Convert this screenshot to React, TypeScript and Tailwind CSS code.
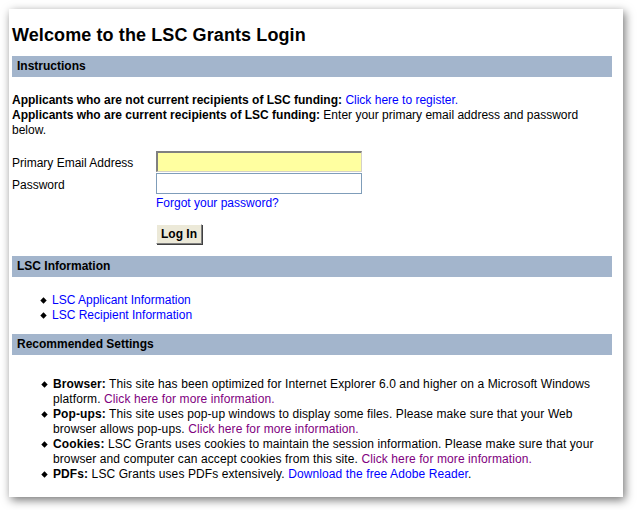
const font = "font-['Liberation_Sans',Arial,sans-serif]";

function SectionBar({ title }: { title: string }) {
  return (
    <div className="h-[21px] bg-[#a3b5cc] pl-[5px] flex items-center">
      <span className="text-[12px] font-bold text-black">{title}</span>
    </div>
  );
}

function Bullet({ children }: { children: React.ReactNode }) {
  return (
    <li className="flex">
      <span className="w-[11px] shrink-0 flex justify-start pt-[5px]">
        <span className="block w-[5px] h-[5px] bg-black rotate-45 scale-90" />
      </span>
      <span>{children}</span>
    </li>
  );
}

export default function App() {
  return (
    <div className={`w-[637px] h-[510px] bg-white p-[9px] ${font}`}>
      <div className="w-[614px] h-[488px] bg-white shadow-[2px_3px_9px_rgba(0,0,0,0.55)] pl-[3px] pr-[11px] text-[12px] leading-[15px] text-black">
        <h1 className="pt-[15px] h-[47px] text-[18px] leading-[22px] font-bold tracking-[0.1px]">
          Welcome to the LSC Grants Login
        </h1>

        <SectionBar title="Instructions" />
        <div className="pt-[16px]">
          <p>
            <b>Applicants who are not current recipients of LSC funding:</b>{" "}
            <a className="text-[#0000ff]">Click here to register.</a>
            <br />
            <b>Applicants who are current recipients of LSC funding:</b> Enter your primary email address and password below.
          </p>
        </div>

        <div className="mt-[13px] grid grid-cols-[144px_206px] gap-y-[1px]">
          <label className="h-[21px] pt-[5px]">Primary Email Address</label>
          <div className="h-[21px] bg-[#ffffa0] border-t-2 border-l-2 border-[#808080] border-r border-r-[#d4d0c8] border-b border-b-[#d4d0c8]" />
          <label className="h-[21px] pt-[5px]">Password</label>
          <div className="h-[21px] bg-white border border-[#7f9db9]" />
          <div />
          <a className="text-[#0000ff] h-[17px] flex items-center">Forgot your password?</a>
          <div />
          <div className="pt-[11px]">
            <button className="h-[20px] px-[4px] bg-[#ece9d8] text-[12px] font-bold border border-t-white border-l-white border-r-[#808080] border-b-[#808080] shadow-[1px_1px_0_#404040]">
              Log In
            </button>
          </div>
        </div>

        <div className="mt-[12px]">
          <SectionBar title="LSC Information" />
        </div>
        <ul className="pt-[16px] pl-[29px]">
          <Bullet><a className="text-[#0000ff]">LSC Applicant Information</a></Bullet>
          <Bullet><a className="text-[#0000ff]">LSC Recipient Information</a></Bullet>
        </ul>

        <div className="mt-[11px]">
          <SectionBar title="Recommended Settings" />
        </div>
        <ul className="pt-[22px] pl-[30px] pr-[6px] tracking-[0.1px]">
          <Bullet>
            <b>Browser:</b> This site has been optimized for Internet Explorer 6.0 and higher on a Microsoft Windows platform.{" "}
            <a className="text-[#800080]">Click here for more information.</a>
          </Bullet>
          <Bullet>
            <b>Pop-ups:</b> This site uses pop-up windows to display some files. Please make sure that your Web browser allows pop-ups.{" "}
            <a className="text-[#800080]">Click here for more information.</a>
          </Bullet>
          <Bullet>
            <b>Cookies:</b> LSC Grants uses cookies to maintain the session information. Please make sure that your browser and computer can accept cookies from this site.{" "}
            <a className="text-[#800080]">Click here for more information.</a>
          </Bullet>
          <Bullet>
            <b>PDFs:</b> LSC Grants uses PDFs extensively.{" "}
            <a className="text-[#0000ff]">Download the free Adobe Reader</a>.
          </Bullet>
        </ul>
      </div>
    </div>
  );
}
